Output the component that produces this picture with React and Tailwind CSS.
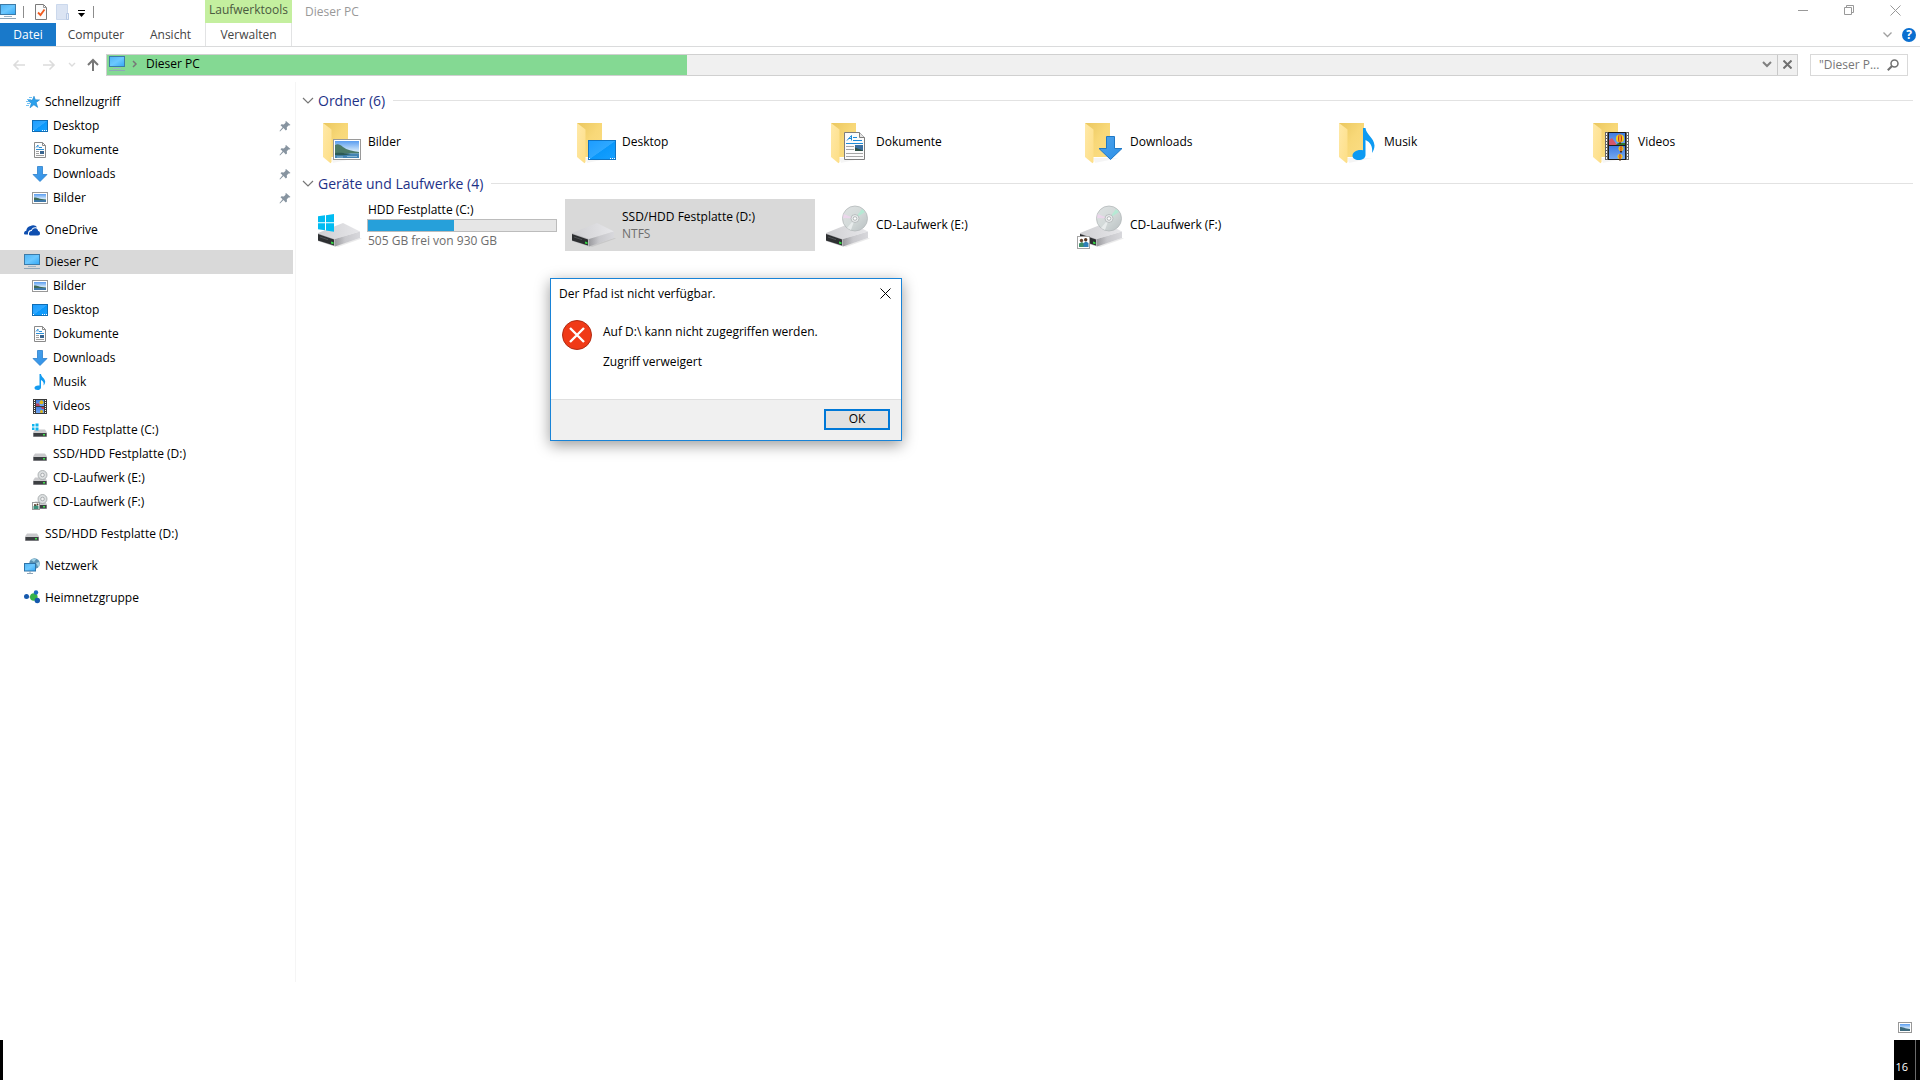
import React from "react";

/* ---------- shared gradients ---------- */

function Defs() {
  return (
    <svg width="0" height="0" className="absolute" aria-hidden="true">
      <defs>
        <linearGradient id="screen" x1="0" y1="0" x2="1" y2="1">
          <stop offset="0" stopColor="#4fb4f5" />
          <stop offset="0.5" stopColor="#6cc8ff" />
          <stop offset="1" stopColor="#33a8f5" />
        </linearGradient>
        <linearGradient id="desk" x1="0" y1="0" x2="1" y2="1">
          <stop offset="0" stopColor="#1c9cff" />
          <stop offset="0.5" stopColor="#2ea8ff" />
          <stop offset="0.52" stopColor="#0a98fb" />
          <stop offset="1" stopColor="#18a0ff" />
        </linearGradient>
        <linearGradient id="back" x1="0" y1="0" x2="1" y2="1">
          <stop offset="0" stopColor="#eac75f" />
          <stop offset="0.5" stopColor="#f8d878" />
          <stop offset="1" stopColor="#fbdd84" />
        </linearGradient>
        <linearGradient id="flap" x1="0" y1="0" x2="1" y2="1">
          <stop offset="0" stopColor="#ffe9a8" />
          <stop offset="1" stopColor="#fdde86" />
        </linearGradient>
        <linearGradient id="sky" x1="0" y1="0" x2="0" y2="1">
          <stop offset="0" stopColor="#5a9df0" />
          <stop offset="0.6" stopColor="#d3e8fa" />
          <stop offset="1" stopColor="#d3e8fa" />
        </linearGradient>
        <linearGradient id="arrow" x1="0" y1="0" x2="1" y2="1">
          <stop offset="0" stopColor="#4ea3ea" />
          <stop offset="1" stopColor="#2b8fe8" />
        </linearGradient>
        <linearGradient id="driveTop" x1="0" y1="0" x2="1" y2="0">
          <stop offset="0" stopColor="#cfcfd2" />
          <stop offset="1" stopColor="#e7e7ea" />
        </linearGradient>
        <linearGradient id="driveSide" x1="0" y1="0" x2="1" y2="0">
          <stop offset="0" stopColor="#9b9b9f" />
          <stop offset="0.4" stopColor="#c8c8cc" />
          <stop offset="1" stopColor="#d8d8dc" />
        </linearGradient>
        <linearGradient id="disc" x1="0" y1="0" x2="1" y2="1">
          <stop offset="0" stopColor="#dfe2e3" />
          <stop offset="0.5" stopColor="#d3dad9" />
          <stop offset="1" stopColor="#b9c0c2" />
        </linearGradient>
        <linearGradient id="film" x1="0" y1="0" x2="0" y2="1">
          <stop offset="0" stopColor="#3f7be0" />
          <stop offset="1" stopColor="#74a8f2" />
        </linearGradient>
      </defs>
    </svg>
  );
}

function Icon16({ children }) {
  return (
    <svg width="16" height="16" viewBox="0 0 16 16" className="shrink-0 overflow-visible" aria-hidden="true">
      {children}
    </svg>
  );
}

/* ---------- small icons ---------- */

const PcIcon = () => (
  <Icon16>
    <rect x="0.5" y="0.5" width="15" height="10" fill="url(#screen)" stroke="#3d7ba8" />
    <rect x="4" y="12" width="8" height="1" fill="#9db4c6" />
    <rect x="0" y="14" width="16" height="1" fill="#8fa6b8" />
  </Icon16>
);
const StarIcon = () => (
  <Icon16>
    <path d="M10 2.2l1.3 3.6 4.2.1-3.3 2.6 1.5 4.9-3.8-2.6-3.9 3 1.3-4.6L4 6.6l4.400-.5z" fill="#2aa0ec" stroke="#1b83cc" strokeWidth="0.6" />
    <path d="M5 3.500h3M3 5.500h4M2 7.500h3M3 9.500h3M2 11.500h3" stroke="#74c2f3" />
  </Icon16>
);
const DesktopIcon = () => (
  <Icon16>
    <rect x="0.5" y="2.500" width="15" height="11" fill="url(#desk)" stroke="#0f6db5" />
    <path d="M1 12.500h1M10 12.500h1M12 12.500h1M14 12.500h1" stroke="#fff" />
  </Icon16>
);
const DocIcon = () => (
  <Icon16>
    <path d="M2.500.5h8l3 3v12h-11z" fill="#fdfdfd" stroke="#8a8a8a" />
    <path d="M10.500.5v3h3" fill="none" stroke="#8a8a8a" />
    <path d="M4 5.500l2-2.500v2.500M4 7.500h8M7 5.500h3" stroke="#2e8fd6" fill="none" />
    <path d="M4 9.500h3M4 11.500h3M4 13.500h8" stroke="#a0a0a0" />
    <rect x="8" y="9" width="4" height="3" fill="#39658f" />
  </Icon16>
);
const DownIcon = () => (
  <Icon16>
    <path d="M5.500.5h5v8h4.500L8 15.500 1 8.500h4.500z" fill="url(#arrow)" stroke="#2b7fcb" strokeWidth="0.8" />
  </Icon16>
);
const PictureIcon = () => (
  <Icon16>
    <rect x="0.5" y="2.500" width="15" height="11" fill="#fff" stroke="#989898" />
    <rect x="2" y="4" width="12" height="8" fill="url(#sky)" />
    <path d="M2 7.500c3-.5 4 1.500 12 2v1H2z" fill="#3e6a58" />
    <rect x="2" y="10" width="12" height="2" fill="#3f78a8" />
  </Icon16>
);
const MusicIcon = () => (
  <Icon16>
    <path d="M7.500 0h1.500c.2 3 4 4.500 4.200 7.500 0 1.500-.7 3-1.700 4 .7-2.500-.2-4.500-2.500-5.500v7.400c0 1.500-1.500 2.600-3.500 2.600-1.800 0-3-.8-3-2.200 0-1.600 2-2.800 5-2.300z" fill="#149bf0" />
  </Icon16>
);
const VideoIcon = () => (
  <Icon16>
    <rect x="1" y="1" width="14" height="15" fill="#3a3a3a" />
    <rect x="4" y="2" width="8" height="6" fill="url(#film)" />
    <rect x="4" y="9" width="8" height="6" fill="url(#film)" />
    <ellipse cx="9.500" cy="4.200" rx="2" ry="2" fill="#e0b81c" />
    <path d="M4 5.500h3l1 2.500H4zM9 9h3v2h-2z" fill="#b8405a" />
    <circle cx="9.500" cy="13.500" r="1.500" fill="#e0b81c" />
    <path d="M2.500 2v13M13.500 2v13" stroke="#fff" strokeDasharray="1 1" />
  </Icon16>
);
const DriveShape = () => (
  <>
    <path d="M3 7.500h10l2 3H1z" fill="#c9c9cc" />
    <rect x="1" y="10.500" width="14" height="4.500" rx="0.5" fill="#b5b5b9" />
    <rect x="1.500" y="11" width="13" height="3.500" fill="#3c3f42" />
    <rect x="11" y="12" width="2" height="1.500" fill="#3fe04c" />
  </>
);
const DriveIcon = () => (
  <Icon16>
    <DriveShape />
  </Icon16>
);
const DriveWinIcon = () => (
  <Icon16>
    <DriveShape />
    <rect x="0" y="1" width="7" height="7" fill="#fff" />
    <path d="M0 2h2.500v2.500H0zM3.500 1.500h3v3h-3zM0 5.500h2.500V8H0zM3.500 5.500h3v3h-3z" fill="#0fb4ee" />
  </Icon16>
);
const SmallDisc = () => (
  <>
    <circle cx="10.500" cy="5" r="4.500" fill="#dcdfe0" stroke="#9fa4a6" strokeWidth="0.8" />
    <circle cx="10.500" cy="5" r="1.800" fill="#f4f4f4" stroke="#9aa0a2" strokeWidth="0.8" />
  </>
);
const CdIcon = () => (
  <Icon16>
    <DriveShape />
    <SmallDisc />
  </Icon16>
);
const CdUsersIcon = () => (
  <Icon16>
    <DriveShape />
    <SmallDisc />
    <rect x="0.5" y="8.500" width="7" height="7" fill="#fff" stroke="#9a9a9a" />
    <path d="M1.500 15v-3l2-1 3 1v3z" fill="#3d8f7a" />
    <circle cx="3" cy="11" r="1" fill="#5a3a28" />
    <circle cx="5.500" cy="10.500" r="1" fill="#5a3a28" />
  </Icon16>
);
const CloudIcon = () => (
  <Icon16>
    <path d="M0 11.500c0-1.500 1-2.500 2.300-2.700C2.300 6 4.500 4.500 6.500 4c2-1.500 5.500-1 6.500 1.500-3-.8-5 .5-5.800 2.500C4.800 8 3.600 9.800 4 12.500H1.500C.6 12.500 0 12.200 0 11.500z" fill="#0f4fb0" />
    <path d="M5 12.500c-.3-2 1-3.300 2.800-3.400.5-2 2-3 3.700-2.800 1.600.2 2.500 1.500 2.600 2.800 1.300.2 1.900 1 1.900 2.200 0 1.500-.8 2.200-2 2.200H7c-1.100 0-1.800-.2-2-1z" fill="#0f4fb0" />
  </Icon16>
);
const NetworkIcon = () => (
  <Icon16>
    <circle cx="10.500" cy="5.500" r="5.300" fill="#5c93b3" />
    <path d="M7 2c2-1.500 4-1.500 5-.8L10 4zM12 5l3-1c1 2 .5 4-.5 5.500z" fill="#9fd0e4" />
    <rect x="0.5" y="5.500" width="11" height="7.500" fill="url(#screen)" stroke="#2f74a8" />
    <path d="M6 13v2M3 15.500h6" stroke="#8fa6b8" />
  </Icon16>
);
const HomeGroupIcon = () => (
  <Icon16>
    <path d="M2.500 7h8M11 6l1-3M10 7l3 3" stroke="#9fb4c4" />
    <circle cx="9.800" cy="7" r="3.800" fill="#35b24a" />
    <circle cx="2.500" cy="6.500" r="2.500" fill="#1559ad" />
    <circle cx="12" cy="2.500" r="2.200" fill="#1b6bc0" />
    <circle cx="13.300" cy="10.500" r="2.700" fill="#1559ad" />
  </Icon16>
);
const PinIcon = () => (
  <svg width="12" height="12" viewBox="0 0 12 12" className="shrink-0" aria-hidden="true">
    <path d="M7 1l4.500 4-1.200.6-.8-.2-1.700 1.900.2 2.200-1.200.9-2.300-2.500L1 11.500l-.5-.5L3.600 7.300 1.500 5.200l1-1 2.300.2L6.600 2.700 6.400 1.800z" fill="#8794a0" />
  </svg>
);

/* ---------- large icons ---------- */

function Icon48({ children }) {
  return (
    <svg width="48" height="48" viewBox="0 0 48 48" className="shrink-0 overflow-visible" aria-hidden="true">
      {children}
    </svg>
  );
}

const FolderBase = () => (
  <>
    <path d="M14 40h26l-24 5z" fill="#000" opacity="0.04" />
    <path d="M6 5h25v34H12z" fill="url(#back)" />
    <path d="M6 5l8.500 6.500V44l-1 1.200L6 39z" fill="url(#flap)" />
  </>
);
const BigPictures = () => (
  <Icon48>
    <FolderBase />
    <rect x="16.500" y="21.500" width="27" height="20" fill="#fff" stroke="#9a9a9a" />
    <rect x="18" y="23" width="24" height="17" fill="url(#sky)" />
    <path d="M18 27c3-1.500 5-.5 8 2 4 3 9 4 16 5v1.500H18z" fill="#4b7a68" />
    <path d="M18 35.500h24V40H18z" fill="#4484b4" />
    <path d="M18 35c5-.5 12 .5 16 1-5 1.500-10 1.500-16 1z" fill="#2c5a55" />
    <path d="M30 38.500h10M20 39h6" stroke="#8ab8d4" />
  </Icon48>
);
const BigDesktop = () => (
  <Icon48>
    <FolderBase />
    <rect x="17.500" y="22.500" width="27" height="19" fill="url(#desk)" stroke="#0f74c4" />
    <path d="M18 40.500h1M39 40.500h1M41 40.500h1M43 40.500h1" stroke="#fff" />
  </Icon48>
);
const BigDocs = () => (
  <Icon48>
    <FolderBase />
    <path d="M19.500 14.500h15l5 5v22h-20z" fill="#fbfbfb" stroke="#7d7d7d" />
    <path d="M34.500 14.500v5h5" fill="#e4e4e4" stroke="#7d7d7d" />
    <path d="M22 22.500l4.500-5v5M23.500 20.500h3M28 19.500h4M28 22.500h9" stroke="#1e8bd8" fill="none" />
    <path d="M21 25.500h17" stroke="#1e8bd8" />
    <path d="M21 28.500h8M21 31.500h8M21 35.500h17M21 38.500h17" stroke="#a6a6a6" />
    <rect x="30" y="27" width="8" height="6" fill="#3a6fa0" />
    <path d="M30 29.500l8 3v.5h-8z" fill="#2e4f44" />
  </Icon48>
);
const BigDownloads = () => (
  <Icon48>
    <FolderBase />
    <path d="M27.500 18.500h8v12H43L31.500 41.500 20 30.500h7.500z" fill="url(#arrow)" stroke="#1f78c6" />
  </Icon48>
);
const BigMusic = () => (
  <Icon48>
    <FolderBase />
    <path d="M30 10h2.500c.5 6.500 8.500 9.500 9 17.500 0 2.500-1 5.500-2.500 7.500 1-6-1.500-11-6.500-13V37c0 3-3 5-7 5-3.500 0-6-1.700-6-4.500 0-3.500 5-6.500 10.500-5.200z" fill="#0d9af2" />
  </Icon48>
);
const Balloon = ({ x, y, r }) => (
  <g>
    <ellipse cx={x} cy={y} rx={r} ry={r} fill="#f3cf1a" />
    <ellipse cx={x} cy={y} rx={r * 0.5} ry={r} fill="#c92a2a" />
    <ellipse cx={x} cy={y} rx={r * 0.2} ry={r} fill="#f3cf1a" />
    <rect x={x - 1} y={y + r} width="2" height="1.500" fill="#4d2f14" />
  </g>
);
const BigVideos = () => (
  <Icon48>
    <FolderBase />
    <rect x="18" y="14" width="24" height="28" fill="#666" />
    <rect x="21" y="14" width="18" height="28" fill="#1c1c1c" />
    <rect x="22" y="15" width="16" height="12" fill="url(#film)" />
    <rect x="22" y="28" width="16" height="13" fill="url(#film)" />
    <path d="M22 22l3-2 5 7h-8z" fill="#d4566a" />
    <path d="M29 27l2-2h7v2z" fill="#2d7a36" />
    <Balloon x={33} y={20.5} r={4} />
    <Balloon x={34} y={30.5} r={2.5} />
    <Balloon x={33} y={38.5} r={2.5} />
    <path d="M19.500 15v27M40.500 15v27" stroke="#fff" strokeDasharray="2 1" />
  </Icon48>
);
const BigDriveShape = () => (
  <>
    <path d="M18 45l25-8 2 0.500-24 8.500z" fill="#000" opacity="0.08" />
    <path d="M1 32l25-10 17 8.500L18 38z" fill="url(#driveTop)" />
    <path d="M18 38l25-7.500V37L18 45.500z" fill="url(#driveSide)" />
    <path d="M1 32l17 6v7.500L1 40z" fill="#b9b9bd" />
    <path d="M1 33l16 5.500v6L1 39.500z" fill="#2d2f31" />
    <path d="M3 36l8 2.700" stroke="#4c4f52" />
    <path d="M14 40.500l2.500.8v2l-2.500-.8z" fill="#35d645" />
  </>
);
const BigDrive = () => (
  <Icon48>
    <BigDriveShape />
  </Icon48>
);
const BigDriveWin = () => (
  <Icon48>
    <BigDriveShape />
    <path d="M1 15.300l7-1v7H1zM9 14.200l8-1.200v8.300H9zM1 22.300h7v7l-7-1zM9 22.300h8v8.400l-8-1.200z" fill="#00bcf2" />
  </Icon48>
);
const BigDisc = () => (
  <>
    <circle cx="30" cy="17.500" r="12.500" fill="url(#disc)" stroke="#b4b9ba" strokeWidth="0.8" />
    <path d="M30 17.500L37 8l3 3z" fill="#a9efd2" opacity="0.7" />
    <path d="M30 17.500L18.500 13l-.5 4z" fill="#f0d4ef" opacity="0.8" />
    <path d="M30 17.500L22 27l4 2z" fill="#eef1f1" opacity="0.8" />
    <circle cx="30" cy="17.500" r="4" fill="#e9ecec" stroke="#b0b5b6" strokeWidth="0.8" />
    <circle cx="30" cy="17.500" r="1.800" fill="#fff" stroke="#a2a8a9" strokeWidth="0.8" />
  </>
);
const BigCd = () => (
  <Icon48>
    <BigDriveShape />
    <BigDisc />
  </Icon48>
);
const BigCdUsers = () => (
  <Icon48>
    <BigDriveShape />
    <BigDisc />
    <rect x="-1.500" y="35.500" width="12" height="12" fill="#fff" stroke="#a3a3a3" />
    <path d="M0 46v-3.500l3-1.500 2 1.500V46z" fill="#3d8f6a" />
    <path d="M4.500 46v-4l2.500-1.500 2.500 1.500v4z" fill="#2e7fb8" />
    <circle cx="2.500" cy="39.500" r="1.700" fill="#6b4630" />
    <circle cx="6.700" cy="38.800" r="1.700" fill="#54331f" />
  </Icon48>
);

/* ---------- data ---------- */

const sidebarGroups = [
  {
    label: "Schnellzugriff",
    icon: StarIcon,
    children: [
      { label: "Desktop", icon: DesktopIcon, pinned: true },
      { label: "Dokumente", icon: DocIcon, pinned: true },
      { label: "Downloads", icon: DownIcon, pinned: true },
      { label: "Bilder", icon: PictureIcon, pinned: true },
    ],
  },
  { label: "OneDrive", icon: CloudIcon, children: [] },
  {
    label: "Dieser PC",
    icon: PcIcon,
    selected: true,
    children: [
      { label: "Bilder", icon: PictureIcon },
      { label: "Desktop", icon: DesktopIcon },
      { label: "Dokumente", icon: DocIcon },
      { label: "Downloads", icon: DownIcon },
      { label: "Musik", icon: MusicIcon },
      { label: "Videos", icon: VideoIcon },
      { label: "HDD Festplatte (C:)", icon: DriveWinIcon },
      { label: "SSD/HDD Festplatte (D:)", icon: DriveIcon },
      { label: "CD-Laufwerk (E:)", icon: CdIcon },
      { label: "CD-Laufwerk (F:)", icon: CdUsersIcon },
    ],
  },
  { label: "SSD/HDD Festplatte (D:)", icon: DriveIcon, children: [] },
  { label: "Netzwerk", icon: NetworkIcon, children: [] },
  { label: "Heimnetzgruppe", icon: HomeGroupIcon, children: [] },
];

const folders = [
  { label: "Bilder", icon: BigPictures },
  { label: "Desktop", icon: BigDesktop },
  { label: "Dokumente", icon: BigDocs },
  { label: "Downloads", icon: BigDownloads },
  { label: "Musik", icon: BigMusic },
  { label: "Videos", icon: BigVideos },
];

const drives = [
  { label: "HDD Festplatte (C:)", icon: BigDriveWin, used: 46, detail: "505 GB frei von 930 GB" },
  { label: "SSD/HDD Festplatte (D:)", icon: BigDrive, detail: "NTFS", selected: true },
  { label: "CD-Laufwerk (E:)", icon: BigCd },
  { label: "CD-Laufwerk (F:)", icon: BigCdUsers },
];

/* ---------- window chrome ---------- */

const Divider = () => <span className="h-3 w-px bg-[#8c8c8c]" />;

function TitleBar() {
  return (
    <header className="flex h-[23px] items-stretch">
      <div className="flex w-[205px] items-center">
        <PcIcon />
        <div className="ml-[7px] flex items-center">
          <Divider />
          <button aria-label="Eigenschaften" className="ml-2.5">
            <svg width="14" height="16" viewBox="0 0 14 16">
              <path d="M1.500.5h8l3 3v12h-11z" fill="#fbfbfb" stroke="#7a7a7a" />
              <path d="M9.500.5v3h3" fill="none" stroke="#9a9a9a" />
              <path d="M4 8.500l2.500 2.500L10.500 5.500" fill="none" stroke="#f05a1e" strokeWidth="1.800" />
            </svg>
          </button>
          <button aria-label="Neuer Ordner" className="ml-2">
            <svg width="14" height="16" viewBox="0 0 14 16">
              <path d="M.5.5h11v9h1v6h-12z" fill="#dbe4f3" stroke="#cbd8ec" />
              <path d="M10.500 9.500h2v6h-2z" fill="#e6edf8" stroke="#b8c9e4" />
            </svg>
          </button>
          <button aria-label="Symbolleiste anpassen" className="ml-2">
            <svg width="8" height="16" viewBox="0 0 8 16">
              <path d="M0 6h7v1H0zM0 9h7L3.500 13z" fill="#000" />
            </svg>
          </button>
          <span className="ml-[7px] flex">
            <Divider />
          </span>
        </div>
      </div>
      <div className="flex w-[87px] justify-center bg-[#c4ef9f] text-[#4b5a3f]">
        <span className="leading-5">Laufwerktools</span>
      </div>
      <h1 className="ml-[13px] leading-6 text-[#999]">Dieser PC</h1>
      <div className="ml-auto flex pr-0.5">
        <button aria-label="Minimieren" className="flex w-[46px] justify-center pt-[5px]">
          <svg width="11" height="11" viewBox="0 0 11 11"><path d="M0 5.500h10" stroke="#999" /></svg>
        </button>
        <button aria-label="Wiederherstellen" className="flex w-[46px] justify-center pt-[5px]">
          <svg width="11" height="11" viewBox="0 0 11 11"><path d="M.5 2.500h7v7h-7zM2.500 2.500v-2h7v7h-2" fill="none" stroke="#999" /></svg>
        </button>
        <button aria-label="Schließen" className="flex w-[46px] justify-center pt-[5px]">
          <svg width="11" height="11" viewBox="0 0 11 11"><path d="M.5.5l10 10M10.500.5l-10 10" stroke="#999" /></svg>
        </button>
      </div>
    </header>
  );
}

function Ribbon() {
  return (
    <nav className="flex h-6 items-stretch border-b border-[#dadbdc] text-[#444]">
      <button className="w-14 bg-[#1979ca] text-white">Datei</button>
      <button className="w-20">Computer</button>
      <button className="w-[69px]">Ansicht</button>
      <button className="w-[87px] border-x border-[#e2e3e4]">Verwalten</button>
      <div className="ml-auto flex items-center gap-2.5 pr-1">
        <button aria-label="Menüband minimieren">
          <svg width="9" height="6" viewBox="0 0 9 6"><path d="M.5.5l4 4 4-4" fill="none" stroke="#a0a0a0" strokeWidth="1.300" /></svg>
        </button>
        <button aria-label="Hilfe" className="flex size-3.5 items-center justify-center rounded-full bg-[#0a6fd0] text-xs leading-none font-bold text-white">
          ?
        </button>
      </div>
    </nav>
  );
}

function AddressRow() {
  return (
    <div className="flex h-[35px] items-center px-3">
      <div className="flex w-[94px] items-center text-[#dcdcdc]">
        <button aria-label="Zurück">
          <svg width="14" height="12" viewBox="0 0 14 12"><path d="M13 6H2M6.500 1.500L2 6l4.500 4.500" fill="none" stroke="currentColor" strokeWidth="1.600" /></svg>
        </button>
        <button aria-label="Vorwärts" className="ml-4">
          <svg width="14" height="12" viewBox="0 0 14 12"><path d="M1 6h11M7.500 1.500L12 6l-4.500 4.500" fill="none" stroke="currentColor" strokeWidth="1.600" /></svg>
        </button>
        <button aria-label="Zuletzt besucht" className="ml-3">
          <svg width="8" height="6" viewBox="0 0 8 6"><path d="M1 1l3 3 3-3" fill="none" stroke="currentColor" strokeWidth="1.400" /></svg>
        </button>
        <button aria-label="Nach oben" className="ml-2.5 text-[#777]">
          <svg width="14" height="14" viewBox="0 0 14 14"><path d="M7 13V2M2 7l5-5 5 5" fill="none" stroke="currentColor" strokeWidth="2" /></svg>
        </button>
      </div>
      <div className="flex h-[22px] flex-1 items-stretch border border-[#d0d0d0] bg-[#f0f0f0]">
        <div className="flex w-[34.3%] items-center bg-[#84d993] pb-0.5 pl-0.5">
          <PcIcon />
          <svg width="6" height="8" viewBox="0 0 6 8" className="ml-[7px]" aria-hidden="true"><path d="M1 1l3 3-3 3" fill="none" stroke="#777" strokeWidth="1.500" /></svg>
          <button className="ml-2 leading-4">Dieser PC</button>
        </div>
        <button aria-label="Vorherige Orte" className="ml-auto flex w-5 items-center justify-center">
          <svg width="10" height="7" viewBox="0 0 10 7"><path d="M1 1l4 4 4-4" fill="none" stroke="#808080" strokeWidth="2" /></svg>
        </button>
        <button aria-label="Laden abbrechen" className="flex w-5 items-center justify-center border-l border-[#c8c8c8]">
          <svg width="9" height="9" viewBox="0 0 9 9"><path d="M.5.5l8 8M8.500.5l-8 8" stroke="#707070" strokeWidth="2" /></svg>
        </button>
      </div>
      <form className="ml-3 flex h-[22px] w-[98px] items-center border border-[#d9d9d9] pr-2 pl-2">
        <input aria-label="Suchen" placeholder={'"Dieser P...'} className="w-full min-w-0 flex-1 outline-none placeholder:text-[#777]" />
        <svg width="12" height="12" viewBox="0 0 12 12" className="shrink-0" aria-hidden="true">
          <circle cx="7.500" cy="4.500" r="3.500" fill="none" stroke="#707070" strokeWidth="1.500" />
          <path d="M5 7L.8 11.200" stroke="#707070" strokeWidth="2" />
        </svg>
      </form>
    </div>
  );
}

/* ---------- sidebar ---------- */

function Sidebar() {
  return (
    <aside className="flex w-[296px] shrink-0 flex-col gap-2 border-r border-[#f5f5f5] pt-2">
      {sidebarGroups.map((g) => (
        <ul key={g.label}>
          <li>
            <button className={g.selected ? "flex h-6 w-[293px] items-center gap-[5px] bg-[#d9d9d9] pl-6" : "flex h-6 w-[293px] items-center gap-[5px] pl-6"}>
              <g.icon />
              <span>{g.label}</span>
            </button>
          </li>
          {g.children.map((c) => (
            <li key={c.label}>
              <button className="flex h-6 w-[293px] items-center gap-[5px] pr-0.5 pl-8 text-left">
                <c.icon />
                <span className="flex-1">{c.label}</span>
                {c.pinned && <PinIcon />}
              </button>
            </li>
          ))}
        </ul>
      ))}
    </aside>
  );
}

/* ---------- content ---------- */

function Section({ title, children }) {
  return (
    <section>
      <h2 className="flex h-[31px] items-center text-sm leading-5 text-[#1e3287]">
        <button aria-label="Gruppe reduzieren" className="mr-1">
          <svg width="12" height="8" viewBox="0 0 12 8"><path d="M1 1l5 5 5-5" fill="none" stroke="#767676" strokeWidth="1.200" /></svg>
        </button>
        <span>{title}</span>
        <span className="ml-2 h-px flex-1 bg-[#e2e2e2]" />
      </h2>
      <div className="grid grid-cols-[repeat(auto-fill,250px)] gap-1 pl-[9px]">{children}</div>
    </section>
  );
}

function Tile({ item }) {
  return (
    <button className={item.selected ? "flex h-[52px] items-center gap-0.5 bg-[#d9d9d9] pr-1 pl-1.5 text-left" : "flex h-[52px] items-center gap-0.5 pr-1 pl-1.5 text-left"}>
      <item.icon />
      <span className="flex min-w-0 flex-1 flex-col gap-px leading-4">
        <span className="pl-px">{item.label}</span>
        {item.used && (
          <span className="flex h-[13px] border border-[#bcbcbc] bg-[#e6e6e6]">
            <span className="bg-[#26a0da]" style={{ width: `${item.used}%` }} />
          </span>
        )}
        {item.detail && <span className="pl-px text-[#6d6d6d]">{item.detail}</span>}
      </span>
    </button>
  );
}

function Content() {
  return (
    <main className="flex min-w-0 flex-1 flex-col pt-[3px] pr-[7px] pl-1.5">
      <Section title="Ordner (6)">
        {folders.map((f) => (
          <Tile key={f.label} item={f} />
        ))}
      </Section>
      <Section title="Geräte und Laufwerke (4)">
        {drives.map((d) => (
          <Tile key={d.label} item={d} />
        ))}
      </Section>
    </main>
  );
}

/* ---------- dialog ---------- */

function ErrorDialog() {
  return (
    <div role="alertdialog" aria-labelledby="dlg-title" className="absolute top-[278px] left-[550px] w-[352px] border border-[#1883d7] bg-white shadow-[0_4px_14px_rgba(0,0,0,0.4)]">
      <div className="flex h-[30px] items-center justify-between pr-2.5 pl-2">
        <h2 id="dlg-title">Der Pfad ist nicht verfügbar.</h2>
        <button aria-label="Schließen" className="pb-0.5">
          <svg width="11" height="11" viewBox="0 0 11 11"><path d="M.5.5l10 10M10.500.5l-10 10" stroke="#000" /></svg>
        </button>
      </div>
      <div className="flex h-[90px] gap-[11px] pt-[11px] pl-[11px]">
        <svg width="30" height="30" viewBox="0 0 30 30" aria-hidden="true">
          <circle cx="15" cy="15" r="14.500" fill="#f03a17" stroke="#b02c14" />
          <path d="M8 8l14 14M22 8L8 22" stroke="#fff" strokeWidth="2.400" />
        </svg>
        <div className="flex flex-col gap-3.5 pt-1 leading-4">
          <p>Auf D:\ kann nicht zugegriffen werden.</p>
          <p>Zugriff verweigert</p>
        </div>
      </div>
      <div className="flex h-[41px] items-center justify-end border-t border-[#dfdfdf] bg-[#f0f0f0] pr-[11px] pb-0.5">
        <button className="h-[21px] w-[66px] border-2 border-[#0078d7] bg-[#e1e1e1] leading-4">OK</button>
      </div>
    </div>
  );
}

export default function App() {
  return (
    <div className="relative flex min-h-screen flex-col overflow-hidden bg-white font-['Open_Sans','Noto_Sans',sans-serif] text-xs text-black">
      <Defs />
      <TitleBar />
      <Ribbon />
      <AddressRow />
      <div className="flex flex-1">
        <Sidebar />
        <Content />
      </div>
      <div className="flex h-[58px] items-end justify-end pr-2 pb-1.5">
        <button aria-label="Große Symbole">
          <svg width="14" height="12" viewBox="0 0 14 12">
            <rect x="0.5" y="0.5" width="13" height="10" fill="#fff" stroke="#989898" />
            <rect x="2" y="2" width="10" height="7" fill="url(#sky)" />
            <path d="M2 5c3 0 5 1.500 10 2v2H2z" fill="#3e6a7c" />
          </svg>
        </button>
      </div>
      <footer className="flex h-10 justify-between">
        <span className="w-[3px] bg-black" />
        <div className="flex w-[26px] bg-black text-white">
          <span className="flex w-[22px] items-end justify-end border-r border-[#6a6a6a] pr-[7px] pb-[5px] text-[11px] leading-4">16</span>
        </div>
      </footer>
      <ErrorDialog />
    </div>
  );
}
